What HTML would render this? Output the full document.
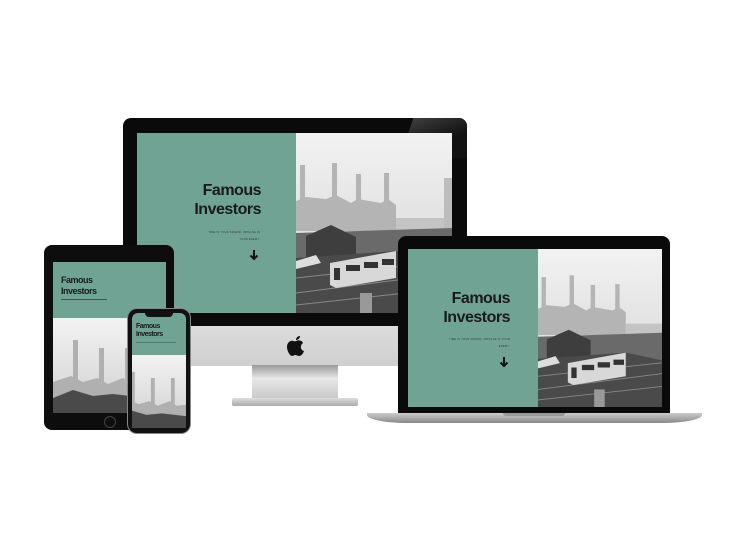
<!DOCTYPE html>
<html><head><meta charset="utf-8"><style>
body{margin:0;width:750px;height:550px;background:#fff;position:relative;overflow:hidden;font-family:"Liberation Sans",sans-serif}
.a{position:absolute}
.g{background:#71a394}
.t{font-weight:bold;color:#1a1a1a;line-height:1.2;text-align:right;letter-spacing:-0.5px}
.s{font-size:2.5px;color:#333;text-align:right;letter-spacing:.3px}
svg{display:block}
</style></head><body>
<svg width="0" height="0" class="a"><defs>
<linearGradient id="sky" x1="0" y1="0" x2="0" y2="1"><stop offset="0" stop-color="#f2f2f2"/><stop offset=".5" stop-color="#e2e2e2"/><stop offset="1" stop-color="#cfcfcf"/></linearGradient>
<symbol id="ph" viewBox="0 0 156 180">
<rect width="156" height="180" fill="url(#sky)"/>
<g fill="#b4b4b4"><rect x="4" y="32" width="5" height="40"/><rect x="36" y="30" width="5" height="40"/><rect x="60" y="41" width="5" height="30"/><rect x="88" y="40" width="5" height="30"/>
<path d="M0 68 L10 64 L30 66 L40 62 L55 70 L62 66 L85 70 L92 66 L100 72 L100 98 L0 98Z"/></g>
<rect x="100" y="85" width="56" height="15" fill="#c4c4c4"/>
<rect x="148" y="45" width="8" height="55" fill="#bdbdbd"/>
<path d="M0 100 L156 95 L156 180 L0 180Z" fill="#6a6a6a"/>
<path d="M10 103 L35 92 L60 104 L60 125 L10 125Z" fill="#3e3e3e"/>
<path d="M0 125 L100 118 L156 130 L156 180 L0 180Z" fill="#4a4a4a"/>
<g stroke="#888" stroke-width="1"><path d="M0 145 L156 128"/><path d="M0 160 L156 140"/><path d="M0 172 L156 155"/></g>
<path d="M34 130 L100 118 L100 145 L40 155 L34 152Z" fill="#d8d8d8"/>
<g fill="#333"><rect x="38" y="135" width="6" height="12"/><rect x="50" y="132" width="14" height="6"/><rect x="68" y="129" width="14" height="6"/><rect x="86" y="126" width="12" height="6"/></g>
<path d="M0 128 L20 122 L25 130 L0 136Z" fill="#ddd"/>
<rect x="64" y="160" width="12" height="20" fill="#999"/>
</symbol>
<symbol id="ph2" viewBox="0 0 113 95">
<rect width="113" height="95" fill="url(#sky)"/>
<g fill="#b0b0b0"><rect x="20" y="22" width="5" height="42"/><rect x="46" y="30" width="5" height="34"/><rect x="72" y="30" width="5" height="34"/><rect x="98" y="28" width="5" height="34"/>
<path d="M0 64 L18 58 L30 64 L44 60 L55 66 L70 60 L80 66 L113 62 L113 85 L0 85Z"/></g>
<path d="M0 80 L20 72 L40 78 L60 76 L113 82 L113 95 L0 95Z" fill="#4a4a4a"/>
</symbol>
</defs></svg>

<!-- iMac -->
<div class="a" style="left:123px;top:118px;width:344px;height:208px;background:#0a0a0a;border-radius:8px 8px 0 0"></div>
<div class="a" style="left:400px;top:118px;width:67px;height:40px;background:linear-gradient(160deg,#444,#111 60%);border-radius:0 8px 0 0;clip-path:polygon(20% 0,100% 0,100% 100%,0 100%)"></div>
<div class="a" style="left:123px;top:326px;width:344px;height:40px;background:linear-gradient(#dcdcdc,#cfcfcf);border-radius:0 0 4px 4px"></div>
<svg class="a" style="left:286px;top:335px" width="20" height="22" viewBox="0 0 20 22"><path d="M10 6 C12 5 16 5 17 8 C14 10 14 15 18 16 C17 19 15 21 13 21 C11 21 11 20 9.5 20 C8 20 7.5 21 6 21 C4 21 1 16 1 12 C1 7 5 5 7.5 6 C8.5 6.5 9 6.5 10 6Z M10 5 C10 3 11.5 1 14 1 C14 3 12.5 5 10 5Z" fill="#111"/></svg>
<div class="a" style="left:252px;top:365px;width:86px;height:34px;background:linear-gradient(#999,#e8e8e8 40%,#c8c8c8);clip-path:polygon(0 0,100% 0,100% 70%,110% 100%,-10% 100%,0 70%)"></div>
<div class="a" style="left:232px;top:398px;width:126px;height:8px;background:linear-gradient(#ddd,#aaa);border-radius:2px"></div>
<div class="a g" style="left:137px;top:133px;width:159px;height:180px"></div>
<svg class="a" style="left:296px;top:133px" width="156" height="180" viewBox="0 0 156 180"><use href="#ph"/></svg>
<div class="a t" style="left:150px;top:181px;width:111px;font-size:16px">Famous<br>Investors</div>
<div class="a s" style="left:180px;top:229px;width:80px;line-height:7px">TIME IS YOUR FRIEND; IMPULSE IS<br>YOUR ENEMY.</div>
<svg class="a" style="left:249px;top:249px" width="10" height="12" viewBox="0 0 10 12"><path d="M5 1V10M1.5 6.5L5 10L8.5 6.5" stroke="#111" stroke-width="2" fill="none"/></svg>

<!-- Laptop -->
<div class="a" style="left:398px;top:236px;width:272px;height:178px;background:#0a0a0a;border-radius:8px 8px 0 0"></div>
<div class="a g" style="left:408px;top:249px;width:130px;height:158px"></div>
<svg class="a" style="left:538px;top:249px" width="124" height="158" viewBox="0 0 156 180" preserveAspectRatio="xMinYMid slice"><use href="#ph"/></svg>
<div class="a t" style="left:420px;top:289px;width:90px;font-size:16px">Famous<br>Investors</div>
<div class="a s" style="left:430px;top:336px;width:80px;line-height:7px">TIME IS YOUR FRIEND; IMPULSE IS YOUR<br>ENEMY.</div>
<svg class="a" style="left:499px;top:356px" width="10" height="12" viewBox="0 0 10 12"><path d="M5 1V10M1.5 6.5L5 10L8.5 6.5" stroke="#111" stroke-width="2" fill="none"/></svg>
<div class="a" style="left:367px;top:413px;width:335px;height:10px;background:linear-gradient(#ccc,#888);border-radius:0 0 40px 40px / 0 0 8px 8px"></div>
<div class="a" style="left:503px;top:413px;width:62px;height:3px;background:#999;border-radius:0 0 4px 4px"></div>

<!-- Tablet -->
<div class="a" style="left:44px;top:245px;width:130px;height:185px;background:#0d0d0d;border-radius:8px"></div>
<div class="a g" style="left:53px;top:262px;width:113px;height:56px"></div>
<svg class="a" style="left:53px;top:318px" width="113" height="95" viewBox="0 0 113 95"><use href="#ph2"/></svg>
<div class="a t" style="left:61px;top:275px;font-size:9px;text-align:left">Famous<br>Investors</div>
<div class="a" style="left:61px;top:299px;width:46px;height:1px;background:#3a5a50"></div>
<div class="a" style="left:104px;top:416px;width:10px;height:10px;border-radius:50%;border:1px solid #444"></div>

<!-- Phone -->
<div class="a" style="left:128px;top:309px;width:62px;height:124px;background:#111;border-radius:9px;box-shadow:0 0 0 1px #888"></div>
<div class="a g" style="left:132px;top:313px;width:54px;height:42px;border-radius:6px 6px 0 0"></div>
<div class="a" style="left:145px;top:313px;width:28px;height:4px;background:#111;border-radius:0 0 4px 4px"></div>
<svg class="a" style="left:132px;top:355px" width="54" height="73" viewBox="0 0 113 95" preserveAspectRatio="xMidYMid slice"><use href="#ph2"/></svg>
<div class="a" style="left:132px;top:355px;width:54px;height:73px;border-radius:0 0 6px 6px;box-shadow:0 0 0 0 #111"></div>
<div class="a t" style="left:136px;top:323px;font-size:7px;text-align:left">Famous<br>Investors</div>
<div class="a" style="left:136px;top:342px;width:40px;height:1px;background:#4d7a6d"></div>
</body></html>
